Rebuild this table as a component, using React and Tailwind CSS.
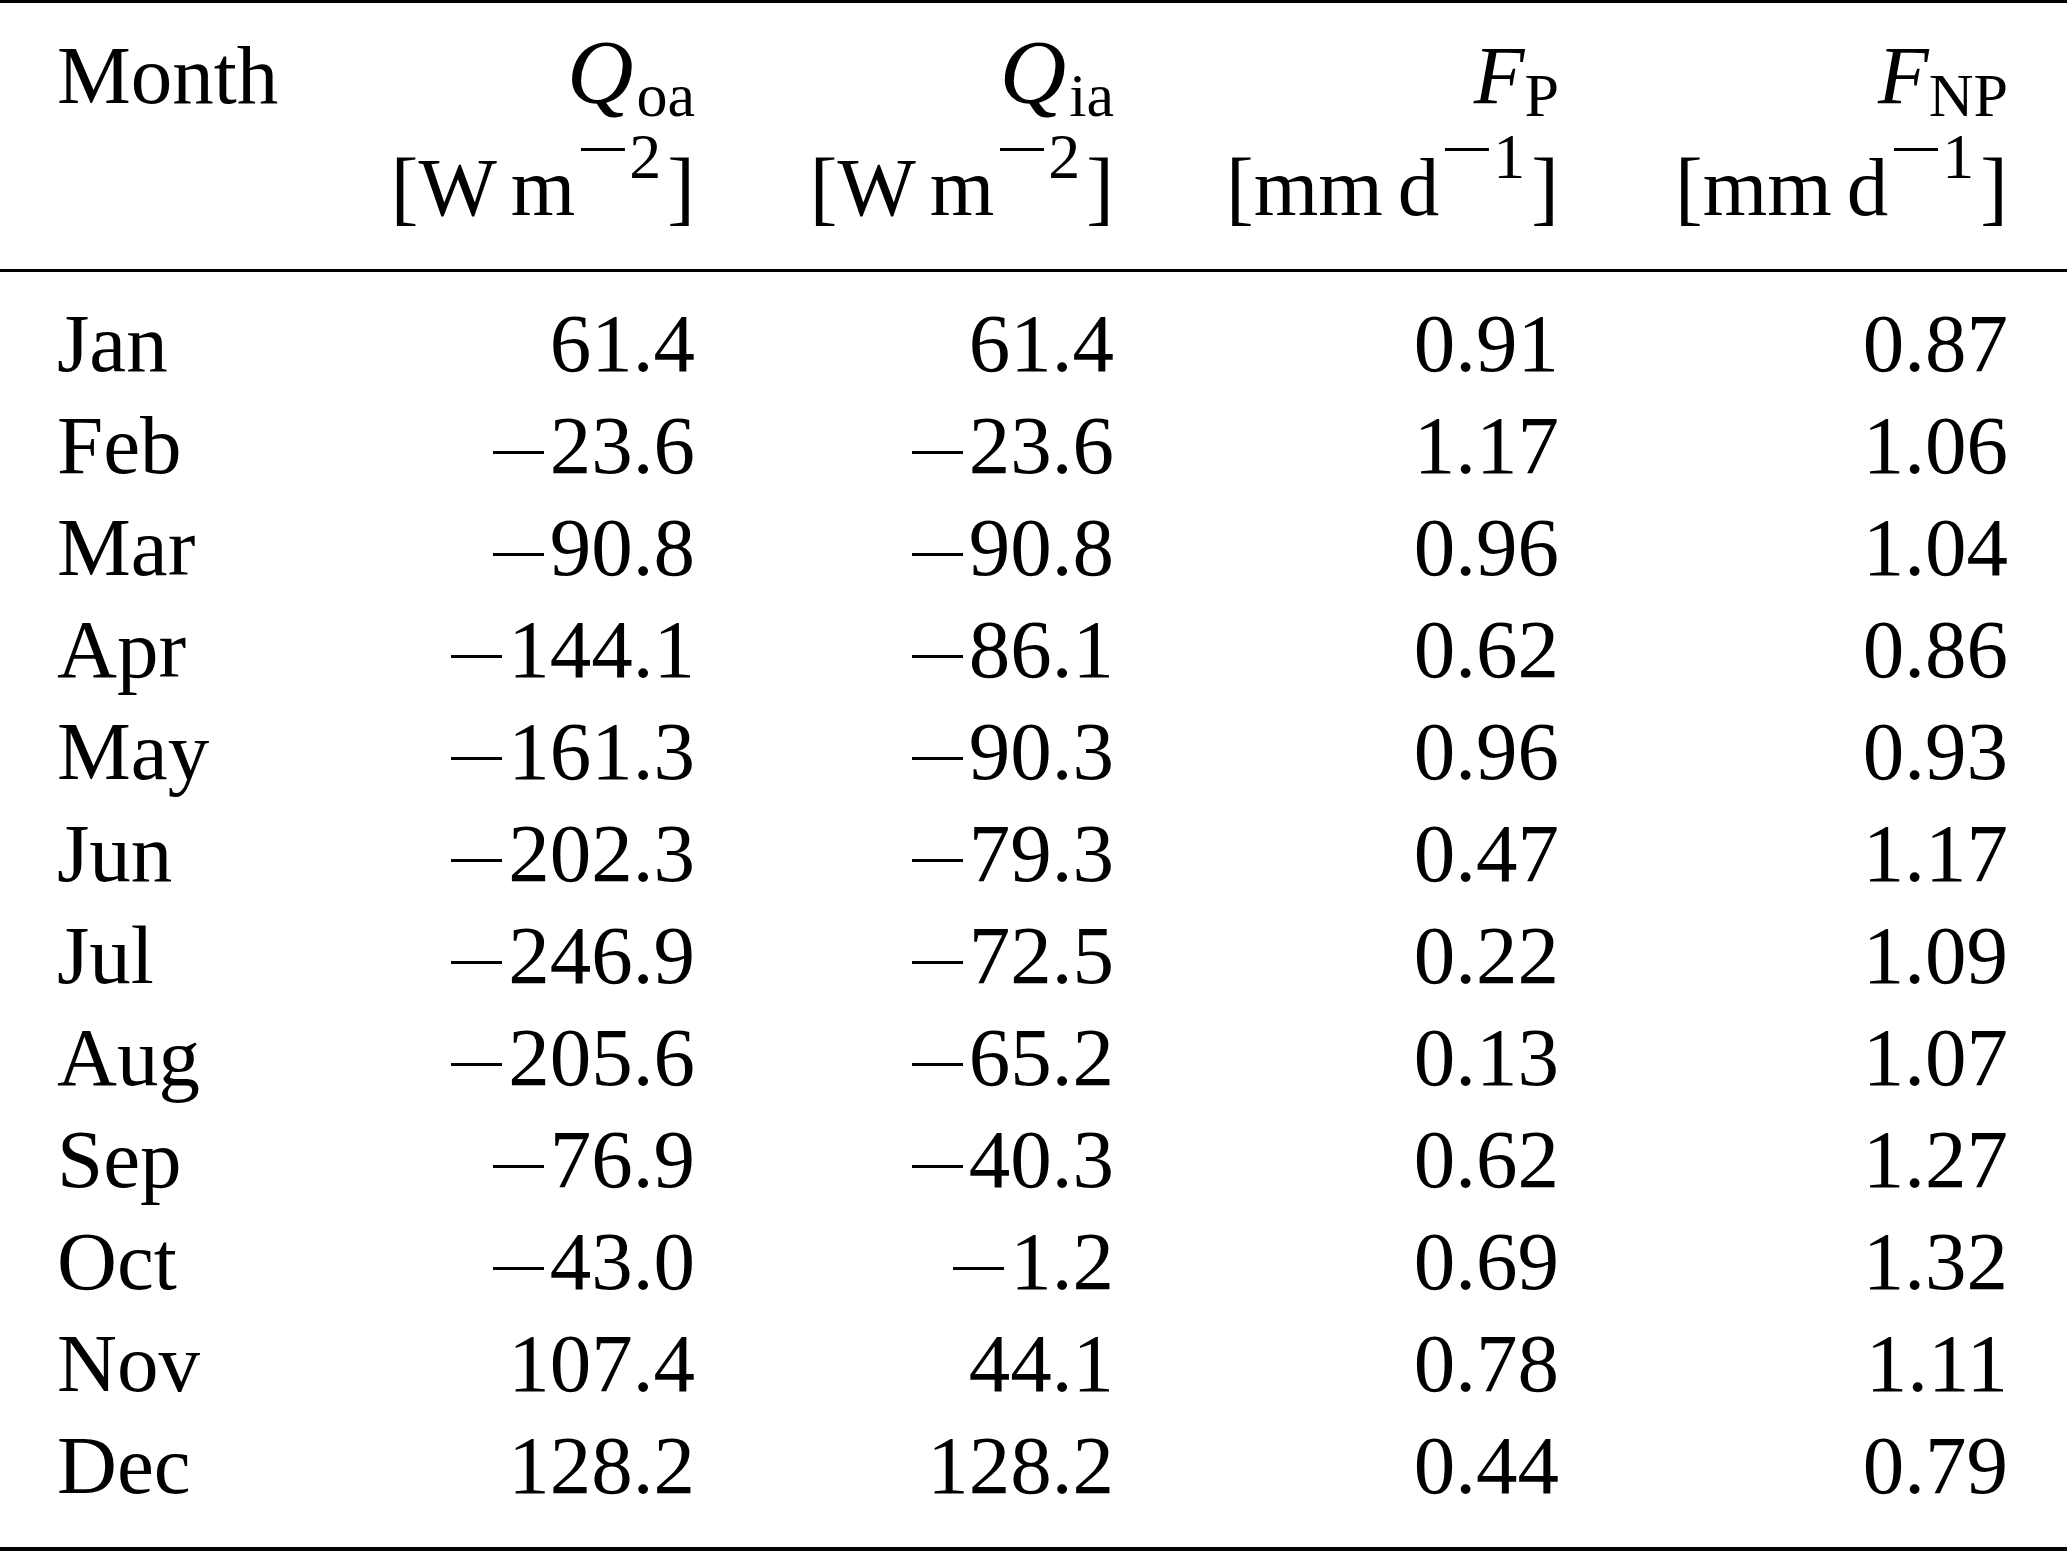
import React from "react";

const rows = [
  ["Jan", "61.4", "61.4", "0.91", "0.87"],
  ["Feb", "−23.6", "−23.6", "1.17", "1.06"],
  ["Mar", "−90.8", "−90.8", "0.96", "1.04"],
  ["Apr", "−144.1", "−86.1", "0.62", "0.86"],
  ["May", "−161.3", "−90.3", "0.96", "0.93"],
  ["Jun", "−202.3", "−79.3", "0.47", "1.17"],
  ["Jul", "−246.9", "−72.5", "0.22", "1.09"],
  ["Aug", "−205.6", "−65.2", "0.13", "1.07"],
  ["Sep", "−76.9", "−40.3", "0.62", "1.27"],
  ["Oct", "−43.0", "−1.2", "0.69", "1.32"],
  ["Nov", "107.4", "44.1", "0.78", "1.11"],
  ["Dec", "128.2", "128.2", "0.44", "0.79"],
];

const cols = "grid grid-cols-[300px_338px_419px_445px_449px] pl-[57px] pr-[59px]";

// math-style minus sign, drawn as a bar (wider than the font's glyph)
function Minus({ small }) {
  if (small) {
    return (
      <span className="relative -top-[64px] ml-[6px] mr-[4px] inline-block h-[3px] w-[44px] bg-black align-baseline" />
    );
  }
  return (
    <span className="relative -top-[19px] mr-[6px] inline-block h-[3px] w-[51px] bg-black align-baseline" />
  );
}

function Sub({ children }) {
  return <span className="relative top-[13px] text-[62px] leading-none">{children}</span>;
}

function Sup({ children }) {
  return (
    <span className="relative -top-[37px] text-[64px] leading-none">
      {children}
    </span>
  );
}

function Unit({ a, b, exp, gap }) {
  return (
    <div className="whitespace-nowrap">
      [{a}
      <span className={gap}>{b}</span>
      <Minus small />
      <Sup>{exp}</Sup>
      <span className="ml-[6px]">]</span>
    </div>
  );
}

function Num({ value }) {
  if (value.startsWith("−")) {
    return (
      <span className="whitespace-nowrap">
        <Minus />
        {value.slice(1)}
      </span>
    );
  }
  return <span>{value}</span>;
}

export default function App() {
  return (
    <div className="min-h-screen bg-white">
      <div className="w-[2067px] font-['Liberation_Serif',serif] text-[83px] text-black">
        <div className="h-[3px] bg-black" />

        {/* header */}
        <div className={`${cols} pt-[16px] pb-[26px] leading-[112px]`}>
          <div>Month</div>
          <div className="text-right">
            <div>
              <i className="mr-[3px] text-[92px] leading-none">Q</i>
              <Sub>oa</Sub>
            </div>
            <Unit a="W" b="m" exp="2" gap="ml-[14px]" />
          </div>
          <div className="text-right">
            <div>
              <i className="mr-[3px] text-[92px] leading-none">Q</i>
              <Sub>ia</Sub>
            </div>
            <Unit a="W" b="m" exp="2" gap="ml-[14px]" />
          </div>
          <div className="text-right">
            <div>
              <i>F</i>
              <Sub>P</Sub>
            </div>
            <Unit a="mm" b="d" exp="1" gap="ml-[15px]" />
          </div>
          <div className="text-right">
            <div>
              <i>F</i>
              <Sub>NP</Sub>
            </div>
            <Unit a="mm" b="d" exp="1" gap="ml-[15px]" />
          </div>
        </div>

        <div className="h-[3px] bg-black" />

        {/* body */}
        <div className={`${cols} pt-[20px] pb-[31px] leading-[102px]`}>
          {rows.map((r) => (
            <React.Fragment key={r[0]}>
              <div>{r[0]}</div>
              <div className="text-right"><Num value={r[1]} /></div>
              <div className="text-right"><Num value={r[2]} /></div>
              <div className="text-right">{r[3]}</div>
              <div className="text-right">{r[4]}</div>
            </React.Fragment>
          ))}
        </div>

        <div className="h-[4px] bg-black" />
      </div>
    </div>
  );
}
